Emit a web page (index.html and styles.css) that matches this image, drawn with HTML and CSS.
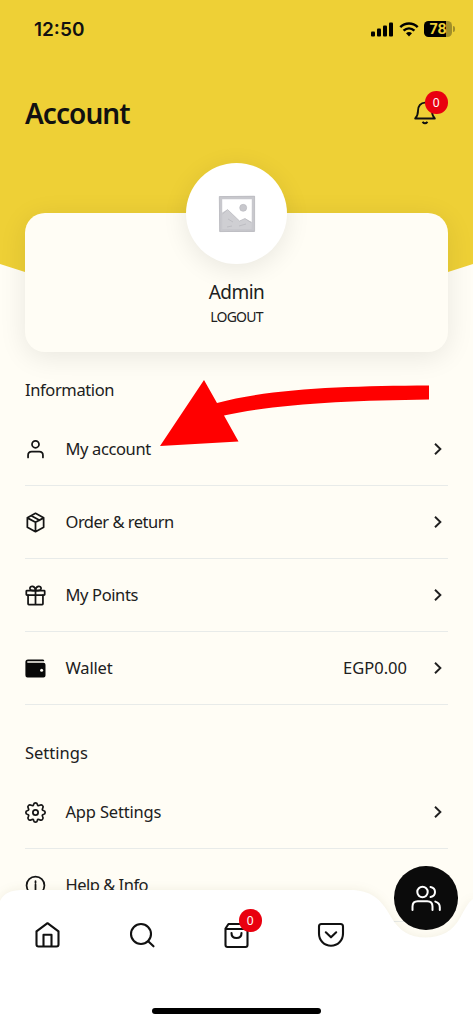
FILE: index.html
```html
<!DOCTYPE html>
<html lang="en">
<head>
<meta charset="utf-8">
<meta name="viewport" content="width=device-width, initial-scale=1">
<title>Account</title>
<link rel="stylesheet" href="styles.css">
</head>
<body>
<div class="screen">
  <div class="backdrop"></div>
  <div class="status">
    <span class="time">12:50</span>
    <div class="indicators">
      <svg width="23" height="15" viewBox="0 0 23 15"><rect x="0" y="9.5" width="4" height="5" rx="1"/><rect x="6" y="6.5" width="4" height="8" rx="1"/><rect x="12" y="3.5" width="4" height="11" rx="1"/><rect x="18" y=".5" width="4" height="14" rx="1"/></svg>
      <svg class="wifi" width="20" height="15" viewBox="0 0 20 15"><path d="M1.3 5.2C6.3.3 13.7.3 18.7 5.2M4.6 8.7C7.8 5.7 12.2 5.7 15.4 8.7" fill="none" stroke="#000" stroke-width="2.5"/><path d="M7 11.3Q10 8.9 13 11.3L10 14.4Z"/></svg>
      <div class="battery"><span>78</span></div>
    </div>
  </div>
  <header class="heading">
    <h1>Account</h1>
    <div class="bell">
      <svg width="24" height="26" viewBox="0 0 24 26" fill="none" stroke="#101010" stroke-width="1.9" stroke-linejoin="round"><path d="M2.2 18.5C4.6 16 5 14.6 5 10.7C5 6 7.8 2.6 12 2.6S19 6 19 10.7C19 14.6 19.4 16 21.8 18.5Z"/><path d="M9.5 21.8Q12 24.8 14.5 21.8"/></svg>
      <span class="badge">0</span>
    </div>
  </header>
  <section class="profile">
    <div class="avatar">
      <svg width="38" height="38" viewBox="0 0 38 38"><path d="M1.5 2L36.3 1.5L36.6 36.5L2 36.2Z" fill="#fff"/><path d="M1.5 19L9.5 14.5L21.5 26L27 23.5L36 28V36.5L2 36Z" fill="#cfcfd3"/><path d="M2.7 2.8L35.3 2.5L35.2 35.4L2.8 35.2Z" fill="none" stroke="#c8c8cd" stroke-width="3"/><path d="M1.3 1.6L36.6 1.2M1.3 1.6L1.8 36.6L36.6 36.2V1.2M4.5 19L9.5 14.5L21.5 26L27 23.5L33 27.5M10 24L15 27M21 31L28 29M9 32L14 31" fill="none" stroke="#b6b6bc" stroke-width=".7"/><circle cx="25.2" cy="12.8" r="3.5" fill="#c8c8cd" stroke="#b6b6bc" stroke-width=".6"/></svg>
    </div>
    <span class="name">Admin</span>
    <span class="logout">LOGOUT</span>
  </section>
  <main class="menu">
    <h2 class="snug">Information</h2>
    <div class="row">
      <svg class="icon" viewBox="0 0 24 24"><circle cx="12" cy="6" r="4"/><path d="M3.5 21V18.5Q3.5 14.3 7.7 14.3H16.3Q20.5 14.3 20.5 18.5V21"/></svg>
      <span class="label snug">My account</span>
      <svg class="chevron" viewBox="0 0 10 14"><path d="M2 1.7L7.4 7L2 12.3"/></svg>
    </div>
    <div class="row">
      <svg class="icon" viewBox="0 0 24 24"><path d="M12 1.5L21.3 6.5V17.5L12 22.5L2.7 17.5V6.5ZM2.7 6.7L12 11.8L21.3 6.7M12 11.8V22.5M7.2 4.2L16.6 9.4"/></svg>
      <span class="label tight">Order &amp; return</span>
      <svg class="chevron" viewBox="0 0 10 14"><path d="M2 1.7L7.4 7L2 12.3"/></svg>
    </div>
    <div class="row">
      <svg class="icon" viewBox="0 0 24 24"><rect x="1.5" y="6.5" width="21" height="5" rx=".7"/><path d="M3.5 11.5V21.5Q3.5 22.3 4.3 22.3H19.7Q20.5 22.3 20.5 21.5V11.5M12 6.5V22.3M12 6.5C9.5 6.5 5.6 6.6 5.6 4C5.6 .2 11.8 .7 12 6.5C12.2 .7 18.4 .2 18.4 4C18.4 6.6 14.5 6.5 12 6.5"/></svg>
      <span class="label snug">My Points</span>
      <svg class="chevron" viewBox="0 0 10 14"><path d="M2 1.7L7.4 7L2 12.3"/></svg>
    </div>
    <div class="row">
      <svg class="icon solid" viewBox="0 0 21 21"><path d="M3 1.5H18Q19.3 1.5 19.3 3.3H3Q2 3.3 2 4T3 4.7H18.5Q20.5 4.7 20.5 6.7V17.5Q20.5 19.5 18.5 19.5H2.5Q.4 19.5.4 17.3V4Q.4 1.5 3 1.5Z"/><circle class="clasp" cx="16.6" cy="12.3" r="1.5"/></svg>
      <span class="label near">Wallet</span>
      <span class="amount">EGP0.00</span>
      <svg class="chevron" viewBox="0 0 10 14"><path d="M2 1.7L7.4 7L2 12.3"/></svg>
    </div>
    <h2 class="second">Settings</h2>
    <div class="row">
      <svg class="icon" viewBox="0 0 24 24"><circle cx="12" cy="12" r="3"/><path d="M10 2.5Q10.3 1 12 1T14 2.5Q14.4 5.1 16.7 3.8Q18.6 2.6 20 4T20.2 7.3Q18.9 9.6 21.5 10Q23 10.3 23 12T21.5 14Q18.9 14.4 20.2 16.7Q21.4 18.6 20 20T16.7 20.2Q14.4 18.9 14 21.5Q13.7 23 12 23T10 21.5Q9.6 18.9 7.3 20.2Q5.4 21.4 4 20T3.8 16.7Q5.1 14.4 2.5 14Q1 13.7 1 12T2.5 10Q5.1 9.6 3.8 7.3Q2.6 5.4 4 4T7.3 3.8Q9.6 5.1 10 2.5Z"/></svg>
      <span class="label near">App Settings</span>
      <svg class="chevron" viewBox="0 0 10 14"><path d="M2 1.7L7.4 7L2 12.3"/></svg>
    </div>
    <div class="row">
      <svg class="icon" viewBox="0 0 24 24"><circle cx="12" cy="12" r="10.2"/><path d="M12 10.8V17M12 7V8.8"/></svg>
      <span class="label tight">Help &amp; Info</span>
      <svg class="chevron" viewBox="0 0 10 14"><path d="M2 1.7L7.4 7L2 12.3"/></svg>
    </div>
  </main>
  <nav class="tabs">
    <svg class="tabs-bg" width="473" height="134" viewBox="0 0 473 134"><path d="M0 11Q5 0 22 0H350C371 0 381 9 391 27C399 41 410 47.5 425.5 47.5C441 47.5 453 41 460 28C466 17 468 13 473 9V134H0Z" fill="#fff"/></svg>
    <div class="tab-items">
      <svg class="tab" viewBox="0 0 28 28"><path d="M3.5 10.3L14.5 2.2L25.5 10.3V23.5Q25.5 25.5 23.5 25.5H5.5Q3.5 25.5 3.5 23.5ZM10.5 25V13.7H18.5V25"/></svg>
      <svg class="tab" viewBox="0 0 28 28"><circle cx="13" cy="13" r="10"/><path d="M20.2 20.2L25.5 25.3"/></svg>
      <div class="bag">
        <svg class="tab" viewBox="0 0 28 28"><path d="M3.5 7.5L6.5 3H22.5L25.5 7.5V24Q25.5 26 23.5 26H5.5Q3.5 26 3.5 24ZM3.5 8H25.5M9.5 12Q9.5 17 14.5 17T19.5 12"/></svg>
        <span class="badge">0</span>
      </div>
      <svg class="tab" viewBox="0 0 28 28"><path d="M4.5 3H23.5Q26 3 26 5.5V12.5C26 19.5 20.7 24.7 14 24.7S2 19.5 2 12.5V5.5Q2 3 4.5 3ZM8.8 11.3L14 16.3L19.2 11.3"/></svg>
    </div>
    <div class="home-bar"></div>
  </nav>
  <div class="fab">
    <svg width="32" height="28" viewBox="0 0 32 28"><circle cx="12.5" cy="8" r="5.2"/><path d="M2.5 26V22.5Q2.5 17.2 7.8 17.2H17.2Q22.5 17.2 22.5 22.5V26M20.5 2.9C26.5 4 26.5 12 20.5 13.1M25.3 17.6Q29.8 18.8 29.8 23.3V26"/></svg>
  </div>
  <svg class="arrow" width="271" height="67" viewBox="0 0 271 67"><path d="M0 66L44 0L57 23C113 8 188 6 269 5.5V19.5C190 20.5 116 24 64 35.5L78.5 61.5Z" fill="#f00"/></svg>
</div>
</body>
</html>
```
FILE: styles.css
```css
* { box-sizing: border-box; }
body { margin: 0; background: #fffdf5; }
svg { display: block; flex: none; }
h1, h2 { margin: 0; font-weight: 400; }
.screen {
  position: relative;
  width: 473px;
  height: 1024px;
  overflow: hidden;
  background: #fffdf5;
  color: #202020;
  font-family: "Noto Sans", "Open Sans", sans-serif;
  white-space: nowrap;
}
.backdrop {
  position: absolute;
  inset: 0 0 auto;
  height: 280px;
  background: #eed036;
  clip-path: polygon(0 0, 100% 0, 100% 264px, 448px 272px, 25px 272px, 0 264px);
}
.status {
  position: relative;
  display: flex;
  justify-content: space-between;
  align-items: center;
  height: 58px;
  padding: 0 20px 0 34px;
}
.time { padding-top: 1px; font: 600 19px/24px Inter, sans-serif; color: #111; }
.indicators { display: flex; align-items: center; gap: 5px; }
.battery {
  position: relative;
  width: 28px;
  height: 16px;
  margin-right: 1px;
  border-radius: 4.5px;
  background: linear-gradient(90deg, #000 78%, #a18e28 78%);
  color: #eed036;
  font: 700 14px/16px Inter, sans-serif;
  text-align: center;
}
.battery::after {
  content: "";
  position: absolute;
  right: -3px;
  top: 5px;
  width: 2px;
  height: 6px;
  border-radius: 0 2px 2px 0;
  background: #a18e28;
}
.heading {
  position: relative;
  display: flex;
  justify-content: space-between;
  align-items: center;
  height: 110px;
  padding: 0 36px 0 25px;
}
.heading h1 { font-size: 28px; font-weight: 600; line-height: 36px; letter-spacing: -.95px; color: #111; }
.bell { position: relative; }
.badge {
  position: absolute;
  width: 22.5px;
  height: 22.5px;
  border-radius: 50%;
  background: #e9000f;
  color: #fff;
  font-size: 12px;
  line-height: 23.5px;
  text-align: center;
}
.bell .badge { left: 12px; top: -9px; }
.profile {
  position: relative;
  display: flex;
  flex-direction: column;
  align-items: center;
  height: 139px;
  margin: 45px 25px 0;
  border-radius: 20px;
  background: #fffdf5;
  box-shadow: 0 5px 28px rgba(0, 0, 0, .09);
}
.avatar {
  display: grid;
  place-items: center;
  width: 101px;
  height: 101px;
  margin-top: -50px;
  border-radius: 50%;
  background: #fff;
  box-shadow: 0 5px 26px rgba(0, 0, 0, .09);
}
.name { margin-top: 15px; font-size: 19px; line-height: 26px; letter-spacing: -.5px; }
.logout { font-size: 14px; line-height: 24px; letter-spacing: -.75px; }
.menu { position: relative; padding: 26px 25px 0; }
.menu h2 { margin-bottom: 11px; font-size: 16.5px; line-height: 24px; }
.menu .second { margin-top: 36px; }
.row {
  display: flex;
  align-items: center;
  height: 73px;
  border-bottom: 1px solid #e8ebe9;
  font-size: 16.5px;
}
.icon { width: 21px; height: 21px; margin-right: 19.5px; fill: none; stroke: #151515; stroke-width: 2; stroke-linecap: round; stroke-linejoin: round; }
.solid { fill: #080808; stroke: none; }
.clasp { fill: #fffdf5; }
.label { flex: 1; padding-bottom: 2px; }
.near { letter-spacing: -.18px; }
.snug { letter-spacing: -.38px; }
.tight { letter-spacing: -.5px; }
.amount { margin-right: 26px; padding-bottom: 2px; }
.chevron { width: 10px; height: 14px; margin-right: 5px; fill: none; stroke: #202020; stroke-width: 1.9; }
.tabs { position: absolute; inset: 890px 0 0; }
.tabs-bg { position: absolute; inset: 0; filter: drop-shadow(0 -1px 5px rgba(90, 70, 0, .07)); }
.tab-items { position: relative; display: flex; gap: 66.5px; padding: 31px 0 0 33px; }
.tab { width: 28px; height: 28px; fill: none; stroke: #111; stroke-width: 2.1; stroke-linejoin: round; stroke-linecap: round; }
.bag { position: relative; }
.bag .badge { left: 17px; top: -12px; }
.home-bar { position: relative; width: 169px; height: 6px; margin: 59px 0 0 152px; border-radius: 3px; background: #000; }
.fab {
  position: absolute;
  left: 394px;
  top: 866px;
  display: grid;
  place-items: center;
  width: 63.5px;
  height: 63.5px;
  border-radius: 50%;
  background: #0b0b0b;
}
.fab svg { fill: none; stroke: #fff; stroke-width: 2; stroke-linecap: round; }
.arrow { position: absolute; left: 160px; top: 380px; }
```
